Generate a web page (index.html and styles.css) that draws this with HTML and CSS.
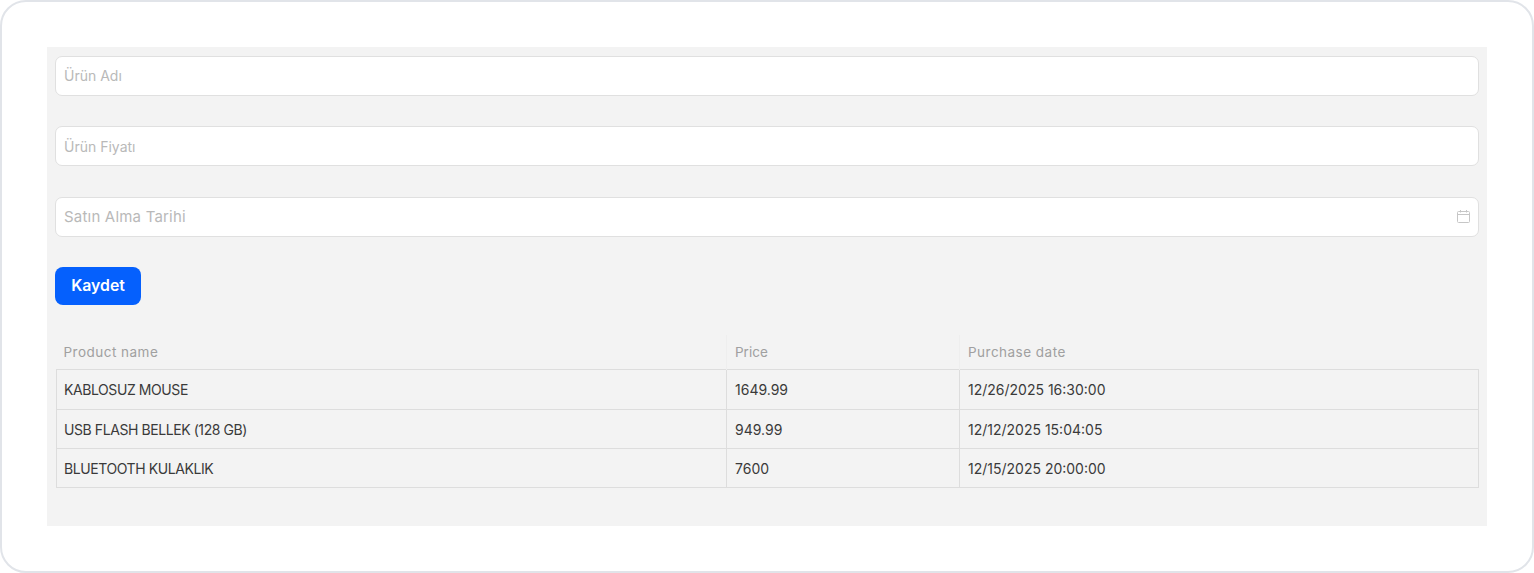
FILE: index.html
```html
<!DOCTYPE html>
<html lang="tr">
<head>
<meta charset="utf-8">
<title>Ürünler</title>
<link rel="stylesheet" href="styles.css">
</head>
<body>
<main class="frame">
  <section class="panel">
    <form class="form">
      <div class="field"><input class="input" type="text" placeholder="Ürün Adı"></div>
      <div class="field"><input class="input" type="text" placeholder="Ürün Fiyatı"></div>
      <div class="field">
        <input class="input input-wide" type="text" placeholder="Satın Alma Tarihi">
        <svg class="cal" width="13" height="13" viewBox="0 0 13 13" fill="none" stroke="#c6c6c6" stroke-width="1">
          <rect x="0.5" y="1.5" width="12" height="11" rx="1"/>
          <path d="M0.5 4.5H12.5M3.5 0V2.5M9.5 0V2.5"/>
        </svg>
      </div>
      <button class="save" type="button">Kaydet</button>
    </form>
    <table class="table">
      <colgroup><col class="c1"><col class="c2"><col class="c3"></colgroup>
      <thead>
        <tr><th class="wide">Product name</th><th>Price</th><th class="wide">Purchase date</th></tr>
      </thead>
      <tbody>
        <tr><td class="name">KABLOSUZ MOUSE</td><td>1649.99</td><td>12/26/2025 16:30:00</td></tr>
        <tr><td class="name">USB FLASH BELLEK (128 GB)</td><td>949.99</td><td>12/12/2025 15:04:05</td></tr>
        <tr><td class="name">BLUETOOTH KULAKLIK</td><td>7600</td><td>12/15/2025 20:00:00</td></tr>
      </tbody>
    </table>
  </section>
</main>
</body>
</html>
```
FILE: styles.css
```css
* { box-sizing: border-box; }
html, body { margin: 0; padding: 0; background: #fff; }
body {
  font-family: "Inter", "Noto Sans", sans-serif;
  color: #333;
}
.frame {
  width: 1534px;
  height: 573px;
  border: 2px solid #e1e4e9;
  border-radius: 26px;
  padding: 45px;
  background: #fff;
}
.panel {
  width: 1440px;
  height: 479px;
  background: #f3f3f3;
  padding: 8.5px 8px;
}
.form { display: flex; flex-direction: column; align-items: flex-start; }
.field { position: relative; width: 100%; margin-bottom: 30.5px; }
.input {
  display: block;
  width: 100%;
  height: 40px;
  border: 1px solid #e0e0e0;
  border-radius: 7px;
  background: #fff;
  padding: 0 8px;
  font: 14px "Inter", "Noto Sans", sans-serif;
  outline: none;
}
.input::placeholder { color: #b9b9b9; opacity: 1; }
.input-wide::placeholder { font-size: 15px; letter-spacing: 0.2px; }
.cal { position: absolute; right: 9px; top: 13px; }
.save {
  width: 86px;
  height: 37.5px;
  border: 0;
  border-radius: 8px;
  background: #0560fd;
  color: #fff;
  font: 600 15.8px "Inter", "Noto Sans", sans-serif;
  padding: 0;
}
.table {
  width: 1422px;
  margin: 30px 0 0 1px;
  border-collapse: collapse;
  table-layout: fixed;
  font-size: 14px;
}
.c1 { width: 670px; }
.c2 { width: 233px; }
.c3 { width: 519px; }
th {
  height: 35px;
  padding: 0 8px;
  text-align: left;
  font-weight: 400;
  font-size: 13.5px;
  color: #a0a0a0;
  border-left: 1px solid #eeeeee;
}
th:first-child { border-left: 0; padding-left: 7px; }
.wide { letter-spacing: 0.48px; }
td {
  height: 39px;
  padding: 0 8px;
  border: 1px solid #dddddd;
  color: #3a3a3a;
}
td:first-child { padding-left: 7px; }
tbody tr:first-child td { height: 40px; }
.name { letter-spacing: -0.42px; }
```
